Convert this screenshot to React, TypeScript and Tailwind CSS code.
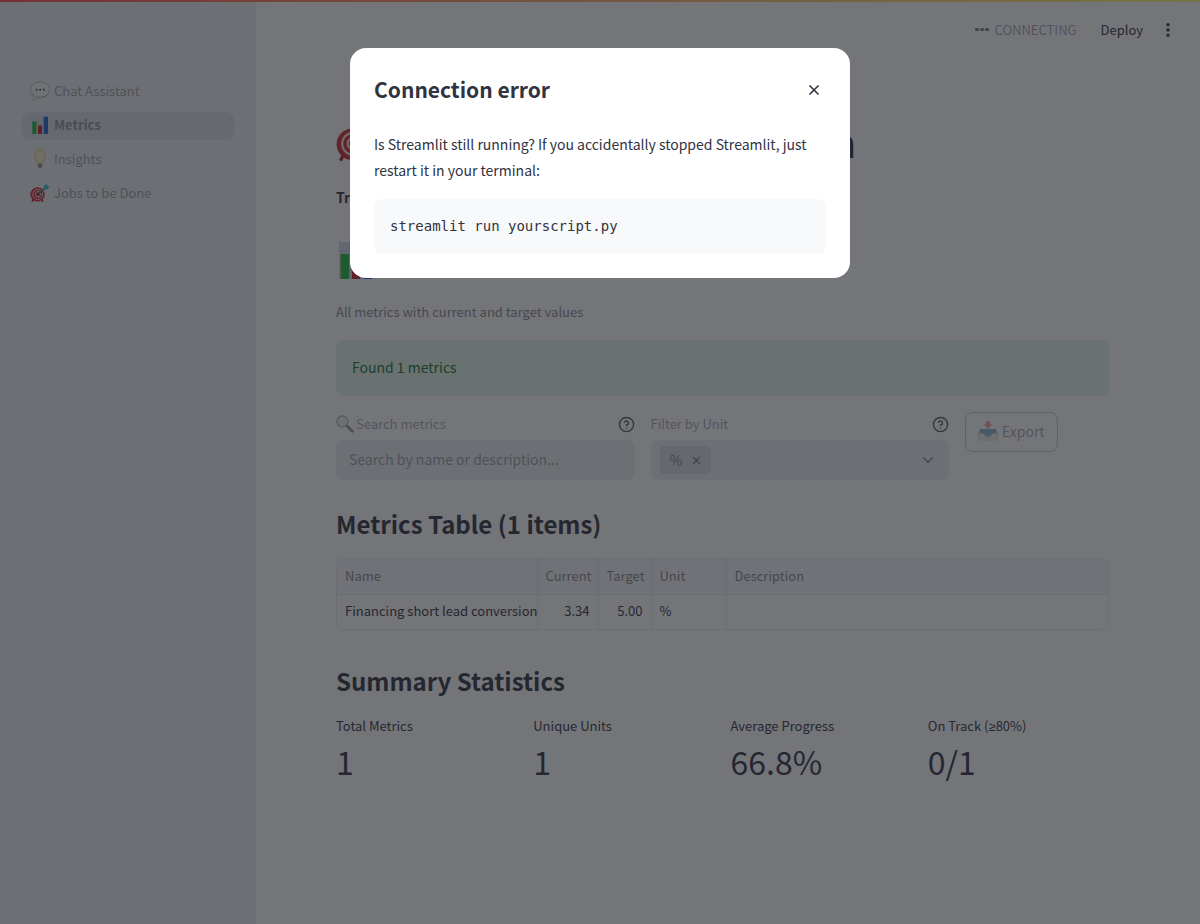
import React from "react";
import { ChevronDown, CircleHelp, EllipsisVertical, X } from "lucide-react";

type IconProps = { className?: string };

function ChatIcon({ className }: IconProps) {
  return (
    <svg viewBox="0 0 20 20" className={className} aria-hidden="true">
      <path d="M10 .8C4.700.8.7 4 .7 8.800c0 3 1.500 5.400 3.300 6.700-.2 1.700-1 2.700-1.500 3.300 2.200 0 4.200-1 5.200-2 .7.200 1.500.2 2.300.2 5.300 0 9.300-3.600 9.300-8.200C19.300 4 15.300.8 10 .8Z" fill="#f4f4f4" stroke="#b4b4b4" strokeWidth=".8" />
      <path d="M1.500 11.500c1.500 2.800 4.500 4.200 8.500 4.200s7.200-1.600 8.500-4.200c-.8 3-4 5.100-8.500 5.100-4 0-7.300-1.900-8.500-5.100Z" fill="#aaa" />
      <circle cx="6.600" cy="8.700" r=".9" fill="#333" />
      <circle cx="10.200" cy="8.700" r=".9" fill="#333" />
      <circle cx="13.800" cy="8.700" r=".9" fill="#333" />
    </svg>
  );
}

function BarsIcon({ className }: IconProps) {
  return (
    <svg viewBox="0 0 20 20" className={className} aria-hidden="true">
      <path d="M1.500.5h17v18.500h-17Z" fill="#d3dde6" />
      <path d="M1.500 5h17M1.500 10h17M1.500 15h17M7 .5V19M13 .5V19" stroke="#b9c6d2" strokeWidth=".4" />
      <path d="M2.300 6.500h4.200V19H2.300Z" fill="#1fba3b" />
      <path d="M8 10.500h4V19H8Z" fill="#d11f2d" />
      <path d="M13.700 1.700H18V19h-4.300Z" fill="#1d68cf" />
    </svg>
  );
}

function BulbIcon({ className }: IconProps) {
  return (
    <svg viewBox="0 0 20 20" className={className} aria-hidden="true">
      <path d="M10 .6c-3.300 0-5.500 2.400-5.500 5.500 0 3.500 2.700 4.900 3.300 8.400h4.400c.6-3.500 3.300-4.900 3.300-8.400C15.500 3 13.300.6 10 .6Z" fill="#f4e9c0" stroke="#d9ba5b" strokeWidth=".8" />
      <path d="M8.700 14 8 8.500l2 1 2-1-.7 5.500" fill="none" stroke="#fff5cf" strokeWidth=".8" />
      <path d="M7.800 14.500h4.400v3l-1.200 2H9l-1.200-2Z" fill="#b5b5b5" />
      <path d="M7.800 16h4.400M8.200 17.800h3.600" stroke="#555" strokeWidth=".8" />
    </svg>
  );
}

function TargetIcon({ className }: IconProps) {
  return (
    <svg viewBox="0 0 20 20" className={className} aria-hidden="true">
      <path d="m3.500 16-1.500 3M11.500 16l1.500 3" stroke="#a5232b" strokeWidth="1.500" />
      <circle cx="7.500" cy="11.500" r="7.200" fill="#cf2630" />
      <circle cx="7.800" cy="11.300" r="5" fill="none" stroke="#f2dede" strokeWidth="1" />
      <circle cx="8" cy="11.200" r="2.700" fill="none" stroke="#f2dede" strokeWidth="1" />
      <path d="m8 11.200 8-6.700" stroke="#2a7c8d" strokeWidth="1.300" />
      <path d="m13.500 6.300.4-3.300L17 .8l.3 2.500 2.500.3-2.500 3Z" fill="#3fb6c6" />
    </svg>
  );
}

function MagnifierIcon({ className }: IconProps) {
  return (
    <svg viewBox="0 0 20 20" className={className} aria-hidden="true">
      <path d="m11.500 11.500 6.700 6.500" stroke="#4c4c4c" strokeWidth="3" strokeLinecap="round" />
      <circle cx="7.200" cy="7.200" r="6.200" fill="#dfe5e8" stroke="#777" strokeWidth="1.200" />
      <path d="M3.800 6.500a3.800 3.800 0 0 1 3.500-2.700" fill="none" stroke="#fff" strokeWidth="1" />
    </svg>
  );
}

function InboxIcon({ className }: IconProps) {
  return (
    <svg viewBox="0 0 20 20" className={className} aria-hidden="true">
      <path d="M2.500 8h15l2 5v6H.5v-6Z" fill="#3686c8" />
      <path d="M.5 12.500h5l2 3h5l2-3h5V19a1 1 0 0 1-1 1h-17a1 1 0 0 1-1-1Z" fill="#e2ded8" />
      <path d="M.8 11.500h5.500l2 3h3.400l2-3h5.500L17.500 8h-15Z" fill="#286fb0" />
      <path d="M8 .3h4v3h2.300L10 7.500 5.700 3.300H8Z" fill="#e34343" />
    </svg>
  );
}

const navItems = [
  { label: "Chat Assistant", Icon: ChatIcon },
  { label: "Metrics", Icon: BarsIcon, active: true },
  { label: "Insights", Icon: BulbIcon },
  { label: "Jobs to be Done", Icon: TargetIcon },
];

const stats = [
  { id: "total", label: "Total Metrics", value: "1" },
  { id: "units", label: "Unique Units", value: "1" },
  { id: "progress", label: "Average Progress", value: "66.8%" },
  {
    id: "on-track",
    label: (
      <>
        On Track (<span className="font-['Noto_Sans',sans-serif]">≥</span>80%)
      </>
    ),
    value: "0/1",
  },
];

function Sidebar() {
  return (
    <aside className="w-64 shrink-0 bg-[#ebf0f2] px-[22px] pt-[76px]">
      <nav className="flex flex-col gap-1.5">
        {navItems.map(({ label, Icon, active }) => (
          <a
            key={label}
            href="#"
            aria-current={active ? "page" : undefined}
            className={
              active
                ? "flex h-7 items-center gap-1 rounded-lg bg-[#dae0e7] px-2 pb-0.5 text-[13px] font-bold text-[#31333f]/45"
                : "flex h-7 items-center gap-1 rounded-lg px-2 pb-0.5 text-[13px] text-[#31333f]/45"
            }
          >
            <Icon className="size-5" />
            {label}
          </a>
        ))}
      </nav>
    </aside>
  );
}

function Header() {
  return (
    <header className="flex h-[55px] items-center justify-end pr-[23px] text-[13px]">
      <span className="flex items-center gap-1.5 text-[#31333f]/45">
        <span className="flex gap-px" aria-hidden="true">
          <i className="h-[3px] w-1 rounded-[1px] bg-[#31333f]/60" />
          <i className="h-[3px] w-1 rounded-[1px] bg-[#31333f]/60" />
          <i className="h-[3px] w-1 rounded-[1px] bg-[#31333f]/60" />
        </span>
        CONNECTING
      </span>
      <button className="ml-6">Deploy</button>
      <button aria-label="Main menu" className="ml-4">
        <EllipsisVertical className="size-[18px]" strokeWidth={2.5} />
      </button>
    </header>
  );
}

function Filters() {
  return (
    <div className="mt-4 grid grid-cols-[1fr_1fr_144px] gap-4">
      <div>
        <div className="flex h-6 items-center text-[13px] text-[#31333f]/45">
          <MagnifierIcon className="mr-0.5 size-[18px] opacity-60" />
          <label htmlFor="search">Search metrics</label>
          <CircleHelp className="ml-auto size-[17px] text-[#31333f]/80" />
        </div>
        <input
          id="search"
          placeholder="Search by name or description..."
          className="mt-1 h-10 w-full rounded-lg bg-[#ebf0f2] px-[13px] pb-0.5 text-[14px] placeholder:text-[#31333f]/45"
        />
      </div>
      <div>
        <div className="flex h-6 items-center text-[13px] text-[#31333f]/45">
          <label htmlFor="unit">Filter by Unit</label>
          <CircleHelp className="ml-auto size-[17px] text-[#31333f]/80" />
        </div>
        <div className="mt-1 flex h-10 items-center rounded-lg bg-[#ebf0f2] pr-3 pl-[9px] text-[14px] text-[#31333f]/55">
          <span className="flex h-7 items-center gap-2 rounded bg-[#d9dde0] pr-2 pl-2.5">
            %
            <button aria-label="Remove %">
              <X className="size-[13px]" />
            </button>
          </span>
          <input id="unit" className="min-w-0 flex-1 bg-transparent" />
          <button aria-label="Open">
            <ChevronDown className="size-[18px]" />
          </button>
        </div>
      </div>
      <div>
        <button className="flex h-10 items-center gap-1 rounded-lg border border-[#31333f]/25 px-3 pb-0.5 text-[14px] text-[#31333f]/45">
          <InboxIcon className="size-5 opacity-50" />
          Export
        </button>
      </div>
    </div>
  );
}

function MetricsTable() {
  return (
    <div className="mt-4 overflow-hidden rounded-lg border border-[#31333f]/10">
      <table className="w-full table-fixed border-collapse text-left text-[13px]">
        <colgroup>
          <col className="w-[200px]" />
          <col className="w-[61px]" />
          <col className="w-[53px]" />
          <col className="w-[75px]" />
          <col />
        </colgroup>
        <thead className="bg-[#f4f8f9] text-[#31333f]/60">
          <tr className="h-[35px] border-b border-[#31333f]/10 *:border-r *:border-[#31333f]/10 *:px-2 *:pb-0.5 *:font-normal *:last:border-r-0">
            <th>Name</th>
            <th className="text-right">Current</th>
            <th className="text-right">Target</th>
            <th>Unit</th>
            <th>Description</th>
          </tr>
        </thead>
        <tbody>
          <tr className="h-[35px] *:border-r *:border-[#31333f]/10 *:pb-0.5 *:last:border-r-0">
            <td className="overflow-hidden pl-2 whitespace-nowrap">Financing short lead conversion rate</td>
            <td className="px-2 text-right">3.34</td>
            <td className="px-2 text-right">5.00</td>
            <td className="px-2">%</td>
            <td />
          </tr>
        </tbody>
      </table>
    </div>
  );
}

function ConnectionDialog() {
  return (
    <div className="fixed inset-0 flex items-start justify-center bg-[#1e2027]/62 pt-12">
      <div role="dialog" aria-modal="true" aria-labelledby="dialog-title" className="w-[500px] max-w-full rounded-2xl bg-white p-6">
        <div className="flex h-9 items-center justify-between">
          <h2 id="dialog-title" className="text-[21px] font-bold">Connection error</h2>
          <button aria-label="Close" className="mr-1">
            <X className="size-4" strokeWidth={2.5} />
          </button>
        </div>
        <p className="mt-[23px] text-[14px] leading-[26px]">
          Is Streamlit still running? If you accidentally stopped Streamlit, just restart it in your terminal:
        </p>
        <pre className="mt-4 rounded-lg bg-[#f8f9fb] p-4 font-['DejaVu_Sans_Mono',monospace] text-[14px] leading-[23px]">
          <code className="font-['DejaVu_Sans_Mono',monospace]">streamlit run yourscript.py</code>
        </pre>
      </div>
    </div>
  );
}

export default function App() {
  return (
    <div className="min-h-screen bg-white font-['Noto_Sans_CJK_SC','Noto_Sans',sans-serif] text-[#31333f]">
      <div className="flex min-h-screen flex-col">
        <div className="h-0.5 bg-linear-to-r from-[#ff4b4b] to-[#fffd80]" />
        <div className="flex flex-1">
          <Sidebar />
          <div className="min-w-0 flex-1">
            <Header />
            <main className="pt-[58px] pr-[91px] pb-20 pl-20">
              <h1 className="flex h-[52px] max-w-[520px] items-center justify-between text-[39px] leading-[52px] font-bold whitespace-nowrap">
                <TargetIcon className="size-11" />
                Metrics Overview Plan
              </h1>
              <p className="mt-[18px] text-[14px] leading-6 font-bold">Track progress towards your targets</p>
              <h2 className="mt-[34px] flex h-9 items-center gap-2 text-[32px] font-bold">
                <BarsIcon className="size-10" />
                Metrics
              </h2>
              <p className="mt-[23px] text-[13px] leading-5 text-[#31333f]/60">All metrics with current and target values</p>
              <div role="status" className="mt-[18px] rounded-lg bg-[#e2f6e8] px-4 pt-[15px] pb-[17px] text-[14px] leading-6 text-[#177233]">
                Found 1 metrics
              </div>
              <Filters />
              <h3 className="mt-[26px] text-[24px] leading-9 font-bold">Metrics Table (1 items)</h3>
              <MetricsTable />
              <h3 className="mt-[33px] text-[24px] leading-9 font-bold">Summary Statistics</h3>
              <dl className="mt-[17px] grid grid-cols-4 gap-4">
                {stats.map(({ id, label, value }) => (
                  <div key={id}>
                    <dt className="text-[13px] leading-5">{label}</dt>
                    <dd className="mt-[3px] text-[32px] leading-[44px]">{value}</dd>
                  </div>
                ))}
              </dl>
            </main>
          </div>
        </div>
      </div>
      <ConnectionDialog />
    </div>
  );
}
